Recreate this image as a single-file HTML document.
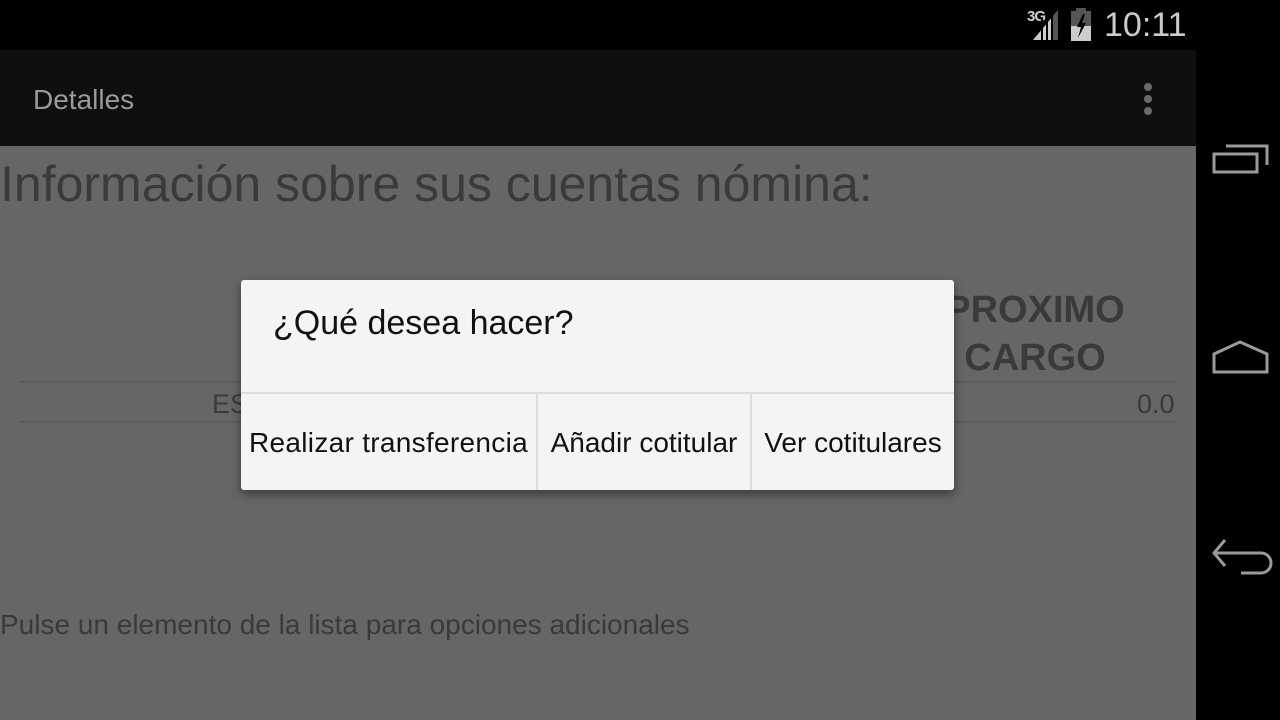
<!DOCTYPE html>
<html><head><meta charset="utf-8"><style>
*{margin:0;padding:0;box-sizing:border-box}
body{width:1280px;height:720px;overflow:hidden;background:#000;font-family:"Liberation Sans",sans-serif;position:relative}
.abs{position:absolute}
#content{left:0;top:146px;width:1196px;height:574px;background:#666}
.line{height:2px;background:#5c5c5c;left:20px;width:1156px}
#dlg{left:241px;top:280px;width:713px;height:210px;background:#f4f4f4;border-radius:3px;box-shadow:0 4px 10px rgba(0,0,0,.45)}
.btn{top:113px;height:97px;font-size:28px;color:#111;line-height:100px;text-align:center;white-space:nowrap}
</style></head><body>
<div class="abs" style="left:0;top:50px;width:1196px;height:96px;background:#0f0f0f"></div>
<div class="abs" style="left:33px;top:84px;font-size:28px;color:#9a9a9a">Detalles</div>
<div class="abs" style="left:1144px;top:83px;width:8px;height:8px;border-radius:4px;background:#6a6a6a"></div>
<div class="abs" style="left:1144px;top:95px;width:8px;height:8px;border-radius:4px;background:#6a6a6a"></div>
<div class="abs" style="left:1144px;top:107px;width:8px;height:8px;border-radius:4px;background:#6a6a6a"></div>
<!-- status -->
<div class="abs" style="left:1027px;top:8px;font-size:15px;font-weight:bold;color:#ccc;letter-spacing:-1px">3G</div>
<svg class="abs" style="left:1030px;top:8px" width="32" height="34"><polygon points="3,32 28,32 28,2" fill="#ccc"/><polygon points="23,8 28,2 28,32 23,32" fill="#555"/><rect x="11" y="10" width="2" height="24" fill="#000"/><rect x="16" y="5" width="2" height="28" fill="#000"/><rect x="21" y="2" width="2" height="30" fill="#000"/></svg>
<svg class="abs" style="left:1068px;top:8px" width="26" height="34"><rect x="3" y="3" width="20" height="30" fill="#555"/><rect x="8" y="0" width="10" height="4" fill="#555"/><rect x="3" y="18" width="20" height="15" fill="#ccc"/><polygon points="15,6 9,19 13,19 10,30 18,15 14,15 17,6" fill="#000"/></svg>
<div class="abs" style="left:1104px;top:6px;font-size:34px;color:#ccc">10:11</div>
<!-- content -->
<div id="content" class="abs">
<div class="abs" style="left:0;top:9px;font-size:50px;color:#3a3a3a;white-space:nowrap">Información sobre sus cuentas nómina:</div>
<div class="abs" style="left:945px;top:140px;font-size:38px;font-weight:bold;color:#3a3a3a;text-align:center;line-height:48px;width:180px">PROXIMO<br>CARGO</div>
<div class="abs line" style="top:235px"></div>
<div class="abs line" style="top:275px"></div>
<div class="abs" style="left:212px;top:243px;font-size:27px;color:#3a3a3a">ES</div>
<div class="abs" style="left:1137px;top:243px;font-size:27px;color:#3a3a3a">0.0</div>
<div class="abs" style="left:0;top:463px;font-size:28px;color:#3a3a3a;white-space:nowrap">Pulse un elemento de la lista para opciones adicionales</div>
</div>
<div id="dlg" class="abs">
<div class="abs" style="left:32px;top:24px;font-size:34px;color:#111">¿Qué desea hacer?</div>
<div class="abs" style="left:0;top:112px;width:713px;height:2px;background:#ddd"></div>
<div class="abs" style="left:295px;top:113px;width:2px;height:97px;background:#ddd"></div>
<div class="abs" style="left:509px;top:113px;width:2px;height:97px;background:#ddd"></div>
<div class="abs btn" style="left:0;width:295px;letter-spacing:0.3px">Realizar transferencia</div>
<div class="abs btn" style="left:297px;width:212px">Añadir cotitular</div>
<div class="abs btn" style="left:511px;width:202px">Ver cotitulares</div>
</div>
<!-- nav -->
<svg class="abs" style="left:1196px;top:0" width="84" height="720" fill="none" stroke="#9a9a9a" stroke-width="3">
<rect x="18" y="154" width="43" height="18"/>
<polyline points="30,146 71,146 71,165"/>
<polygon points="18,372 18,354 44,342 71,354 71,372"/>
<polyline points="29,540 18,553 29,566"/>
<path d="M18,553 H65 A10,10 0 0 1 65,573 H45"/>
</svg>
</body></html>
